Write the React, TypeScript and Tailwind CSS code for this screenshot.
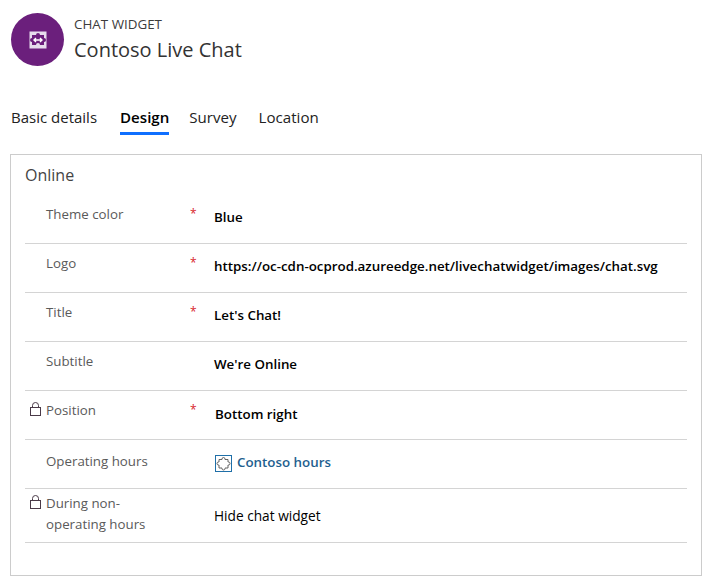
const rows = [
  { label: 'Theme color', value: 'Blue', required: true, pb: 'pb-[3px]' },
  { label: 'Logo', value: 'https://oc-cdn-ocprod.azureedge.net/livechatwidget/images/chat.svg', required: true, pb: 'pb-[4px]' },
  { label: 'Title', value: "Let's Chat!", required: true, pb: 'pb-[4px]' },
  { label: 'Subtitle', value: "We're Online", required: false, pb: 'pb-[4px]' },
];

function LockIcon() {
  return (
    <svg width="11" height="14" viewBox="0 0 11 14" fill="none" stroke="#4a3a48" strokeWidth="1" className="shrink-0">
      <path d="M2.5 5.5V3.5a3 3 0 0 1 6 0v2" />
      <rect x="0.5" y="5.5" width="10" height="8" />
    </svg>
  );
}

function PuzzleIcon() {
  return (
    <svg width="17" height="17" viewBox="0 0 17 17" fill="none" className="shrink-0 mt-[3px] ml-[1px]">
      <rect x="0.5" y="0.5" width="16" height="16" stroke="#1f6fa8" />
      <path d="M4 4.5H7V4A1.5 1.5 0 0 1 10 4V4.5H13V7H13.5A1.5 1.5 0 0 1 13.5 10H13V13H10V13.5A1.5 1.5 0 0 1 7 13.5V13H4V10H3.5A1.5 1.5 0 0 1 3.5 7H4Z" stroke="#555" strokeWidth="0.9" />
    </svg>
  );
}

type RowProps = {
  lock?: boolean;
  lockTop?: string;
  label: React.ReactNode;
  labelTop?: string;
  required?: boolean;
  children: React.ReactNode;
  height?: string;
  valueClass?: string;
};

function Row({ lock, lockTop = 'pt-[11px]', label, labelTop = 'pt-[9px]', required, children, height = 'h-[49px]', valueClass = 'pb-[2px]' }: RowProps) {
  return (
    <div className={`flex border-b border-[#d4d4d4] ${height}`}>
      <div className={`w-[21px] pl-[5px] ${lockTop}`}>{lock && <LockIcon />}</div>
      <div className={`w-[144px] text-[13.3px] leading-[21px] text-[#5a5a5a] ${labelTop}`}>{label}</div>
      <div className="w-[24px] pt-[8px] text-[12px] leading-[21px] text-[#d8232a]">{required ? '*' : ''}</div>
      <div className={`flex-1 flex items-center text-[13.35px] font-semibold text-black whitespace-nowrap ${valueClass}`}>{children}</div>
    </div>
  );
}

export default function App() {
  return (
    <div className="w-[714px] h-[586px] bg-white font-['Open_Sans',sans-serif] overflow-hidden">
      {/* Header */}
      <div className="flex items-center gap-[10px] pl-[11px] pt-[13px]">
        <div className="w-[53px] h-[53px] rounded-full bg-[#6b1f7c] flex items-center justify-center">
          <svg width="18" height="18" viewBox="0 0 18 18" fill="none">
            <rect x="0.5" y="0.5" width="17" height="17" fill="#e6dcec" />
            <path d="M3 4h4a2 2 0 0 1 4 0h4v3a2 2 0 0 1 0 4v3h-4a2 2 0 0 0-4 0H3v-3a2 2 0 0 1 0-4z" fill="#6b1f7c" />
            <path d="M5 9h8M7 7 5 9l2 2M11 7l2 2-2 2" stroke="#fff" strokeWidth="1.4" />
          </svg>
        </div>
        <div>
          <div className="text-[13.4px] leading-[18px] mb-[2px] text-[#3c3c3c]">CHAT WIDGET</div>
          <div className="text-[20px] leading-[30px] text-[#333]">Contoso Live Chat</div>
        </div>
      </div>

      {/* Tabs */}
      <div className="flex gap-[20px] pl-[11px] mt-[40px] text-[15.1px] text-[#222]">
        <div className="pb-[3px] text-[15px]">Basic details</div>
        <div className="ml-[3px] pb-[3px] font-semibold text-black border-b-[3px] border-[#0f6fff]">Design</div>
        <div className="pb-[3px]">Survey</div>
        <div className="ml-[2px] pb-[3px]">Location</div>
      </div>

      {/* Online card */}
      <div className="ml-[10px] mt-[19px] w-[692px] h-[422px] border border-[#cccccc] px-[14px] pt-[8px]">
        <div className="text-[16px] leading-[24px] text-[#444] mb-[8px]">Online</div>
        {rows.map((r) => (
          <Row key={r.label} label={r.label} required={r.required} valueClass={r.pb}>{r.value}</Row>
        ))}
        <Row lock label="Position" required valueClass="pb-[2px]">
          <span className="ml-[1px]">Bottom right</span>
        </Row>
        <Row label="Operating hours" labelTop="pt-[11px]" valueClass="pb-[3px]">
          <PuzzleIcon />
          <span className="ml-[5px] text-[#1f5f8f]">Contoso hours</span>
        </Row>
        <Row lock lockTop="pt-[6px]" label={<>During non-<br />operating hours</>} labelTop="pt-[4px]" height="h-[54px]" valueClass="pt-[3px]">
          <span className="font-medium text-[13.7px]">Hide chat widget</span>
        </Row>
      </div>
    </div>
  );
}
